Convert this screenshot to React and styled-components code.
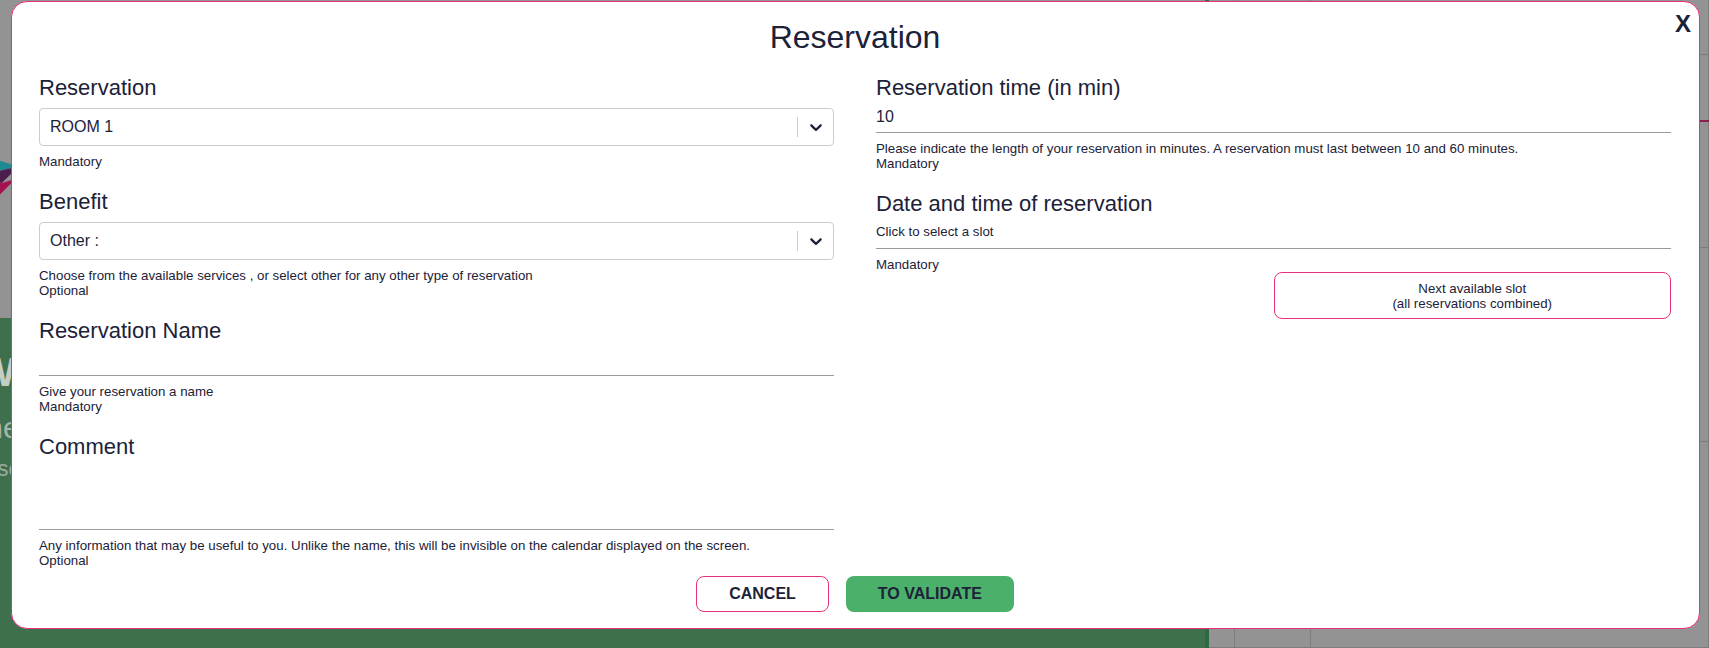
import React from 'react'
import styled, { createGlobalStyle } from 'styled-components'

const PINK = '#e8307c'
const INK = '#1c2238'

function Chevron() {
    return (
        <svg width="20" height="20" viewBox="0 0 20 20" aria-hidden="true">
            <path
                fill={INK}
                d="M4.516 7.548c0.436-0.446 1.043-0.481 1.576 0l3.908 3.747 3.908-3.747c0.533-0.481 1.141-0.446 1.574 0 0.436 0.445 0.408 1.197 0 1.615-0.406 0.418-4.695 4.502-4.695 4.502-0.217 0.223-0.502 0.335-0.787 0.335s-0.57-0.112-0.789-0.335c0 0-4.287-4.084-4.695-4.502s-0.436-1.17 0-1.615z"
            />
        </svg>
    )
}

function Select({ value }) {
    return (
        <SelectBox>
            <SelectValue>{value}</SelectValue>
            <Separator />
            <Indicator><Chevron /></Indicator>
        </SelectBox>
    )
}

function App() {
    return (
        <>
            <GlobalStyle />
            <Page>
                <LeftPane>
                    <TopBand>
                        <Logo width="48" height="48" viewBox="0 0 40 40">
                            <polygon points="0,2 32,12 6,18" fill="#1f8a90" />
                            <polygon points="6,18 32,12 18,26" fill="#4b1e4d" />
                            <polygon points="6,18 18,26 30,22 12,40 0,32" fill="#a5124f" />
                        </Logo>
                    </TopBand>
                    <Hero>
                        <HeroTitle>Welcome</HeroTitle>
                        <HeroLine>the online booking</HeroLine>
                        <HeroSmall>reservations</HeroSmall>
                    </Hero>
                </LeftPane>
                <Divider />
                <Calendar>
                    {Array.from({ length: 12 }).map((_, i) => <Cell key={i} />)}
                    <NowLine />
                </Calendar>

                <Modal>
                    <CloseButton>X</CloseButton>
                    <Title>Reservation</Title>

                    <Columns>
                        <Column>
                            <Field>
                                <Label>Reservation</Label>
                                <Select value="ROOM 1" />
                                <Help>Mandatory</Help>
                            </Field>
                            <Field>
                                <Label>Benefit</Label>
                                <Select value="Other :" />
                                <Help>
                                    Choose from the available services , or select other for any other type of reservation
                                    <br />Optional
                                </Help>
                            </Field>
                            <Field>
                                <Label>Reservation Name</Label>
                                <TextInput defaultValue="" />
                                <Help>
                                    Give your reservation a name
                                    <br />Mandatory
                                </Help>
                            </Field>
                            <Field>
                                <Label>Comment</Label>
                                <TextArea defaultValue="" />
                                <Help>
                                    Any information that may be useful to you. Unlike the name, this will be invisible on the calendar displayed on the screen.
                                    <br />Optional
                                </Help>
                            </Field>
                        </Column>

                        <Column>
                            <Field>
                                <Label>Reservation time (in min)</Label>
                                <TextInput defaultValue="10" />
                                <Help>
                                    Please indicate the length of your reservation in minutes. A reservation must last between 10 and 60 minutes.
                                    <br />Mandatory
                                </Help>
                            </Field>
                            <Field>
                                <Label>Date and time of reservation</Label>
                                <SlotPicker>Click to select a slot</SlotPicker>
                                <Help>Mandatory</Help>
                                <NextSlot>
                                    Next available slot
                                    <br />(all reservations combined)
                                </NextSlot>
                            </Field>
                        </Column>
                    </Columns>

                    <Footer>
                        <ActionButton>CANCEL</ActionButton>
                        <ActionButton $primary>TO VALIDATE</ActionButton>
                    </Footer>
                </Modal>
            </Page>
        </>
    )
}

export default App

const GlobalStyle = createGlobalStyle`
    html, body {
        margin: 0;
        padding: 0;
    }

    body {
        font-family: "Liberation Sans", Arial, Helvetica, sans-serif;
        color: ${INK};
    }
`

const Page = styled.div`
    position: relative;
    width: 100vw;
    height: 100vh;
    overflow: hidden;
    display: grid;
    grid-template-columns: 1205px 4px 1fr;
    background: #939393;
`

const LeftPane = styled.div`
    display: flex;
    flex-direction: column;
`

const TopBand = styled.div`
    height: 318px;
    background: #939393;
`

const Logo = styled.svg`
    display: block;
    margin: 152px 0 0 -20px;
`

const Hero = styled.div`
    flex: 1;
    background: #3f704d;
    padding-top: 30px;
    margin-left: -22px;
`

const HeroTitle = styled.div`
    font-size: 40px;
    font-weight: 700;
    line-height: 48px;
    color: #c4ccc6;
`

const HeroLine = styled.div`
    margin-top: 14px;
    font-size: 30px;
    line-height: 36px;
    color: #a7b6ab;
`

const HeroSmall = styled.div`
    margin-top: 10px;
    font-size: 22px;
    color: #9aab9e;
`

const Divider = styled.div`
    background: #2c6a3f;
`

const Calendar = styled.div`
    position: relative;
    display: grid;
    grid-template-columns: 26px 76px 1fr;
    grid-template-rows: 55px 193px 194px 1fr;
`

const Cell = styled.div`
    border-right: 1px solid #7d7d7d;
    border-bottom: 1px solid #7d7d7d;
`

const NowLine = styled.div`
    position: absolute;
    left: 0;
    right: 0;
    top: 120px;
    height: 2px;
    background: #8c1f4e;
`

const Modal = styled.div`
    position: absolute;
    top: 1px;
    left: 11px;
    width: 1689px;
    height: 628px;
    box-sizing: border-box;
    border: 1px solid ${PINK};
    border-radius: 16px;
    background: #fff;
    padding: 15px 28px 0 27px;
    display: flex;
    flex-direction: column;
`

const CloseButton = styled.div`
    position: absolute;
    top: 10px;
    right: 8px;
    font-size: 24px;
    line-height: 24px;
    font-weight: 700;
    cursor: pointer;
`

const Title = styled.h1`
    margin: 0 0 18px;
    text-align: center;
    font-size: 32px;
    line-height: 40px;
    font-weight: 400;
`

const Columns = styled.div`
    display: grid;
    grid-template-columns: 1fr 1fr;
    column-gap: 42px;
`

const Column = styled.div`
    display: flex;
    flex-direction: column;
    gap: 20px;
`

const Field = styled.div`
    display: flex;
    flex-direction: column;
`

const Label = styled.label`
    font-size: 22px;
    line-height: 26px;
    margin-bottom: 7px;
`

const SelectBox = styled.div`
    display: flex;
    align-items: center;
    height: 38px;
    box-sizing: border-box;
    border: 1px solid #cccccc;
    border-radius: 4px;
    background: #fff;
`

const SelectValue = styled.div`
    flex: 1;
    padding: 0 10px;
    font-size: 16px;
`

const Separator = styled.span`
    align-self: stretch;
    width: 1px;
    margin: 8px 0;
    background: #cccccc;
`

const Indicator = styled.div`
    width: 35px;
    display: flex;
    align-items: center;
    justify-content: center;
`

const TextInput = styled.input`
    display: block;
    width: 100%;
    height: 25px;
    box-sizing: border-box;
    padding: 0 0 6px;
    border: none;
    border-bottom: 1px solid #9a9a9a;
    outline: none;
    background: transparent;
    font-family: inherit;
    font-size: 16px;
    line-height: 18px;
    color: ${INK};
`

const TextArea = styled.textarea`
    display: block;
    width: 100%;
    height: 63px;
    box-sizing: border-box;
    padding: 0;
    border: none;
    border-bottom: 1px solid #9a9a9a;
    outline: none;
    resize: none;
    background: transparent;
    font-family: inherit;
    font-size: 16px;
    color: ${INK};
`

const SlotPicker = styled.div`
    font-size: 13.3px;
    line-height: 15px;
    padding-bottom: 9px;
    border-bottom: 1px solid #9a9a9a;
    cursor: pointer;
`

const Help = styled.div`
    margin-top: 8px;
    font-size: 13.3px;
    line-height: 15px;
`

const NextSlot = styled.button`
    align-self: flex-end;
    width: 50%;
    height: 47px;
    box-sizing: border-box;
    padding: 0;
    border: 1px solid ${PINK};
    border-radius: 8px;
    background: #fff;
    font-family: inherit;
    font-size: 13.3px;
    line-height: 15px;
    color: ${INK};
    cursor: pointer;
`

const Footer = styled.div`
    display: flex;
    justify-content: center;
    gap: 17px;
    margin-top: 8px;
`

const ActionButton = styled.button`
    height: 36px;
    box-sizing: border-box;
    padding: 0 32px;
    border: ${props => props.$primary ? 'none' : `1px solid ${PINK}`};
    border-radius: 8px;
    background: ${props => props.$primary ? '#4bb06a' : '#fff'};
    font-family: inherit;
    font-size: 16px;
    font-weight: 700;
    color: ${INK};
    cursor: pointer;
`
